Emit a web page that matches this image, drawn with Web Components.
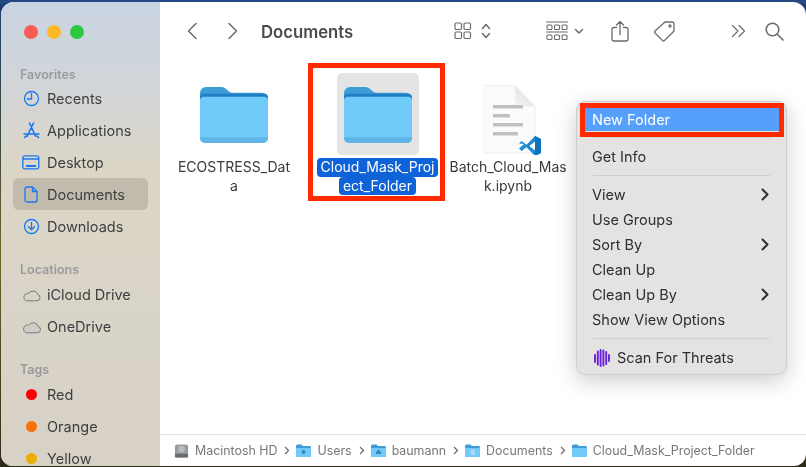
<!DOCTYPE html>
<html>
<head>
<meta charset="utf-8">
<title>Documents</title>
<style>
  html, body{
    margin: 0;
    width: 806px;
    height: 467px;
    overflow: hidden;
    font-family: Inter, "Noto Sans", sans-serif;
  }
  body{
    background:
      linear-gradient(#23467f, #2b4f8c 3px, transparent 3px),
      linear-gradient(#1f3f73 0, #3b4a3a 30%, #6f6426 55%, #2c2a16 100%);
  }
</style>
</head>
<body>

<template id="finder-window-tpl">
  <style>
    :host{
      display: flex;
      position: relative;
      width: 805px;
      height: 464px;
      margin: 2px 0 0 1px;
      border-radius: 13px 13px 12px 12px;
      overflow: hidden;
      background: #fff;
      filter: blur(.35px);
    }
    #sidebar{
      width: 159px;
      flex: none;
      box-sizing: border-box;
      padding: 23px 11px 0 12px;
      background: linear-gradient(180deg, #c9d4e2 0, #d0d5da 70px, #dcd6c6 170px, #d9d4c8 300px, #d8d2c6 100%);
      border-right: 1px solid #d4d4d2;
      overflow: hidden;
    }
    #lights{
      display: flex;
      gap: 9px;
      padding-left: 11px;
      margin-bottom: 28px;
    }
    .light{
      width: 14px;
      height: 14px;
      border-radius: 50%;
    }
    #main{
      flex: 1;
      min-width: 0;
      display: flex;
      flex-direction: column;
    }
    #content{
      flex: 1;
      min-height: 0;
      position: relative;
    }
  </style>
  <div id="sidebar">
    <div id="lights">
      <div class="light" style="background:#fb5b54"></div>
      <div class="light" style="background:#fdb828"></div>
      <div class="light" style="background:#2cc940"></div>
    </div>
    <slot name="sidebar"></slot>
  </div>
  <div id="main">
    <slot name="toolbar"></slot>
    <div id="content"><slot></slot></div>
    <slot name="path"></slot>
  </div>
</template>

<template id="side-section-tpl">
  <style>
    :host{
      display: block;
      margin-bottom: 19.5px;
    }
    #label{
      font-size: 12.5px;
      font-weight: 600;
      line-height: 16px;
      color: #9a9a9c;
      padding-left: 7px;
      margin-bottom: var(--label-gap, 0);
    }
  </style>
  <div id="label"></div>
  <slot></slot>
</template>

<template id="side-item-tpl">
  <style>
    :host{
      display: flex;
      align-items: center;
      height: 32px;
      border-radius: 6px;
      color: #3f3f3f;
      font-size: 14.5px;
      box-sizing: border-box;
    }
    :host([active]){
      background: #c0bbac;
    }
    #icon{
      width: 34px;
      flex: none;
      display: flex;
      justify-content: center;
      padding-left: 2px;
      box-sizing: border-box;
    }
    svg{ display: block; }
  </style>
  <div id="icon"><slot name="icon"></slot></div>
  <slot></slot>
</template>

<template id="tool-bar-tpl">
  <style>
    :host{
      display: flex;
      align-items: center;
      height: 58px;
      flex: none;
      color: #555;
    }
    #title{
      font-size: 16.7px;
      font-weight: 600;
      color: #4b4b4b;
      margin: 2px 0 0 22px;
    }
    svg{
      display: block;
      fill: none;
      stroke: #6b6b6b;
      stroke-width: 1.5;
      stroke-linecap: round;
      stroke-linejoin: round;
    }
    .nav{ margin-left: 26px; }
    .nav + .nav{ margin-left: 29px; }
    #right{
      margin-left: auto;
      display: flex;
      align-items: center;
      padding-right: 22px;
    }
  </style>
  <svg class="nav" width="12" height="20" viewBox="0 0 12 20"><path d="M10 2.500 2.500 10l7.500 7.500"/></svg>
  <svg class="nav" width="12" height="20" viewBox="0 0 12 20"><path d="M2 2.500 9.500 10 2 17.500"/></svg>
  <div id="title">Documents</div>
  <div id="right">
    <svg width="18" height="18" viewBox="0 0 18 18" style="stroke-width:1.2"><rect x="1" y="1" width="6.500" height="6.500" rx="1.200"/><rect x="10" y="1" width="6.500" height="6.500" rx="1.200"/><rect x="1" y="10" width="6.500" height="6.500" rx="1.200"/><rect x="10" y="10" width="6.500" height="6.500" rx="1.200"/></svg>
    <svg width="10" height="18" viewBox="0 0 10 18" style="margin-left:9px"><path d="M1.500 6.500 5 2.500l3.500 4M1.500 11.500 5 15.500l3.500-4"/></svg>
    <svg width="22" height="20" viewBox="0 0 22 20" style="margin-left:55px;stroke-width:1.100"><path d="M.5 1h21M.5 11h21" /><rect x="1" y="4" width="5" height="4.500" rx="1"/><rect x="8.500" y="4" width="5" height="4.500" rx="1"/><rect x="16" y="4" width="5" height="4.500" rx="1"/><rect x="1" y="14" width="5" height="4.500" rx="1"/><rect x="8.500" y="14" width="5" height="4.500" rx="1"/><rect x="16" y="14" width="5" height="4.500" rx="1"/></svg>
    <svg width="10" height="7" viewBox="0 0 10 7" style="margin-left:6px"><path d="M1.500 1.500 5 5l3.500-3.500"/></svg>
    <svg width="18" height="22" viewBox="0 0 18 22" style="margin-left:27px;stroke-width:1.300"><path d="M5.500 7.500H3a2 2 0 0 0-2 2V19a2 2 0 0 0 2 2h12a2 2 0 0 0 2-2V9.500a2 2 0 0 0-2-2h-2.500M9 14.500V1.500M5.500 5 9 1.500 12.500 5"/></svg>
    <svg width="23" height="22" viewBox="0 0 23 22" style="margin-left:24px;stroke-width:1.300"><path d="M12 2h7a2 2 0 0 1 2 2v7L11.500 20.500a1.500 1.500 0 0 1-2 0L2 13a1.500 1.500 0 0 1 0-2z"/><circle cx="17" cy="6" r="1"/></svg>
    <svg width="15" height="14" viewBox="0 0 15 14" style="margin-left:55px;stroke-width:1.200"><path d="M1.500 1.500 7 7l-5.500 5.500M8 1.500 13.500 7 8 12.500"/></svg>
    <svg width="19" height="19" viewBox="0 0 19 19" style="margin-left:19px;stroke-width:1.600"><circle cx="7.500" cy="7.500" r="6.300"/><path d="M12.300 12.300 18 18"/></svg>
  </div>
</template>

<template id="file-grid-tpl">
  <style>
    :host{
      display: grid;
      grid-template-columns: 132px 155px 106px;
      justify-content: start;
      padding: 13px 0 0 8px;
    }
  </style>
  <slot></slot>
</template>

<template id="file-item-tpl">
  <style>
    :host{
      display: flex;
      flex-direction: column;
      align-items: center;
      color: #3a3a3a;
      font-size: 14px;
    }
    #thumb{
      width: 82px;
      height: 82px;
      border-radius: 5px;
      display: flex;
      align-items: center;
      justify-content: center;
      flex: none;
    }
    :host([selected]) #thumb{ background: #e4e4e4; }
    #name{
      margin-top: 3px;
      width: 124px;
      flex: none;
      text-align: center;
      line-height: 18.500px;
    }
    #name span{ display: block; width: fit-content; margin: 0 auto; padding: 0 3.500px; }
    :host([selected]) #name span{
      background: #0e63d8;
      color: #fff;
      border-radius: 4px;
    }
  </style>
  <div id="thumb"><slot name="icon"></slot></div>
  <div id="name"></div>
</template>

<template id="folder-icon-tpl">
  <style>
    :host{ display: block; line-height: 0; margin-top: 1px; }
  </style>
  <svg width="68" height="58" viewBox="0 0 68 60" preserveAspectRatio="none">
    <path d="M0 7a6 6 0 0 1 6-6h15c3 0 4 1 6 3s3 3 6 3h29a6 6 0 0 1 6 6v20H0z" fill="#3d9bd8"/>
    <path d="M0 12a4 4 0 0 1 4-4h60a4 4 0 0 1 4 4v5H0z" fill="#1f7fc4"/>
    <path d="M0 15a4 4 0 0 1 4-4h60a4 4 0 0 1 4 4v39a5 5 0 0 1-5 5H5a5 5 0 0 1-5-5z" fill="#70cbfa"/>
    <path d="M0 53h68v1a5 5 0 0 1-5 5H5a5 5 0 0 1-5-5z" fill="#5fb6e6"/>
  </svg>
</template>

<template id="doc-icon-tpl">
  <style>
    :host{ display: block; line-height: 0; margin: 12px 0 0 8px; }
  </style>
  <svg width="58" height="70" viewBox="0 0 58 70">
    <defs>
      <linearGradient id="corner" x1="0" y1="1" x2="1" y2="0"><stop offset="0" stop-color="#f4f4f4"/><stop offset="1" stop-color="#dcdcdc"/></linearGradient>
    </defs>
    <path d="M2 .5h30l20 21V66a2 2 0 0 1-2 2H2a2 2 0 0 1-2-2V2.500a2 2 0 0 1 2-2z" fill="#fbfbfb" stroke="#ececec" stroke-width=".8"/>
    <path d="M32 .5V19.500a2 2 0 0 0 2 2h18z" fill="url(#corner)"/>
    <g fill="#c0c0c0">
      <rect x="10" y="20" width="30" height="3.500"/>
      <rect x="10" y="29" width="17" height="3.500"/>
      <rect x="10" y="38" width="30" height="3.500"/>
      <rect x="10" y="47" width="25" height="3.500"/>
    </g>
    <path d="M36 58.500 38.500 56l5 3.700L52 51l6 3v14l-6 3-8.500-8.700-5 3.700-2.500-2.500 5-4.500z" fill="#1f8fdc"/>
    <path d="M52 51l6 3v14l-6 3V65.500L44 61l8-5.500z" fill="#0f72bd"/>
    <path d="M52 56.500v9l-6-4.500z" fill="#fff"/>
  </svg>
</template>

<template id="context-menu-tpl">
  <style>
    :host{
      display: block;
      position: absolute;
      left: 416px;
      top: 41px;
      width: 211px;
      height: 274px;
      box-sizing: border-box;
      padding: 5px 5px;
      background: #e4e3e1;
      border: 1px solid #cfcecc;
      border-radius: 9px;
      box-shadow: 0 6px 22px rgba(0,0,0,.2);
      color: #2f2f2f;
      font-size: 14.5px;
    }
  </style>
  <slot></slot>
</template>

<template id="menu-item-tpl">
  <style>
    :host{
      display: flex;
      align-items: center;
      height: 25px;
      padding: 0 12px 0 10px;
    }
    :host([highlight]){
      background: #569ffd;
      color: #fff;
      height: 24px;
    }
    #arrow{
      display: none;
      margin-left: auto;
    }
    :host([more]) #arrow{ display: block; }
    ::slotted(svg){ margin-right: 6px; }
  </style>
  <slot></slot>
  <svg id="arrow" width="8" height="13" viewBox="0 0 8 13" fill="none" stroke="#2f2f2f" stroke-width="2" stroke-linecap="round" stroke-linejoin="round"><path d="M1.500 1.500 6.500 6.500l-5 5"/></svg>
</template>

<template id="menu-sep-tpl">
  <style>
    :host{
      display: block;
      height: 1px;
      background: #d0cfcd;
      margin: 6px 11px;
    }
  </style>
</template>

<template id="mark-box-tpl">
  <style>
    :host{
      display: block;
      position: absolute;
      box-sizing: border-box;
      border: 5px solid #ff2a00;
      pointer-events: none;
    }
  </style>
</template>

<template id="path-bar-tpl">
  <style>
    :host{
      display: flex;
      align-items: center;
      height: 32px;
      flex: none;
      box-sizing: border-box;
      border-top: 1px solid #e4e4e4;
      padding-left: 14px;
      color: #777;
      font-size: 12.4px;
      white-space: nowrap;
    }
  </style>
  <slot></slot>
</template>

<template id="path-crumb-tpl">
  <style>
    :host{
      display: flex;
      align-items: center;
    }
    #sep{
      margin: 0 6px 0 7px;
      display: block;
    }
    :host([last]) #sep{ display: none; }
    ::slotted(svg){ margin-right: 6px; }
  </style>
  <slot></slot>
  <svg id="sep" width="6" height="9" viewBox="0 0 6 9" fill="none" stroke="#6e6e6e" stroke-width="1.300"><path d="M1 1l3.500 3.500L1 8"/></svg>
</template>

<mac-finder>
  <side-section slot="sidebar" label="Favorites" style="--label-gap:-1px">
    <side-item>
      <svg slot="icon" width="17" height="17" viewBox="0 0 17 17" fill="none" stroke="#1a78f0" stroke-width="1.300" stroke-linecap="round"><circle cx="8.500" cy="8.500" r="7"/><path d="M8.500 3.500v5.500H4.500"/></svg>
      Recents
    </side-item>
    <side-item>
      <svg slot="icon" width="17" height="17" viewBox="0 0 17 17" fill="none" stroke="#1a78f0" stroke-width="1.600" stroke-linecap="round"><path d="M6.500 1l6 13M10.500 1l-6.500 13.500M1 12h15M1.500 15.500 3 14M15.500 15.500 14 14"/></svg>
      Applications
    </side-item>
    <side-item>
      <svg slot="icon" width="18" height="15" viewBox="0 0 18 15" fill="none" stroke="#1a78f0" stroke-width="1.300"><rect x=".8" y=".8" width="16" height="13" rx="2"/><path d="M1 4h16"/><path d="M4 11h10" stroke-width="2"/></svg>
      Desktop
    </side-item>
    <side-item active>
      <svg slot="icon" width="14" height="17" viewBox="0 0 14 17" fill="none" stroke="#1a78f0" stroke-width="1.300" stroke-linejoin="round"><path d="M3 1h5.500L13 5.500V14a2 2 0 0 1-2 2H3a2 2 0 0 1-2-2V3a2 2 0 0 1 2-2z"/><path d="M8.500 1v4.500H13"/></svg>
      Documents
    </side-item>
    <side-item>
      <svg slot="icon" width="17" height="17" viewBox="0 0 17 17" fill="none" stroke="#1a78f0" stroke-width="1.300" stroke-linecap="round" stroke-linejoin="round"><circle cx="8.500" cy="8.500" r="7"/><path d="M8.500 4.500v7M5.500 8.800l3 3 3-3"/></svg>
      Downloads
    </side-item>
  </side-section>
  <side-section slot="sidebar" label="Locations" style="--label-gap:1px">
    <side-item>
      <svg slot="icon" width="19" height="14" viewBox="0 0 19 13" fill="none" stroke="#7a7a7a" stroke-width="1"><path d="M5 12.300h10a3.300 3.300 0 0 0 .5-6.500 4 4 0 0 0-4.500-3 5 5 0 0 0-4.800 2.400A3.600 3.600 0 0 0 5 12.300z"/></svg>
      iCloud Drive
    </side-item>
    <side-item>
      <svg slot="icon" width="19" height="14" viewBox="0 0 19 13" fill="#cfcdc8" stroke="#7a7a7a" stroke-width="1"><path d="M4.500 12.300h11a3.300 3.300 0 0 0 .5-6.500 4.500 4.500 0 0 0-4.500-3.500 5 5 0 0 0-5 2.500 3.800 3.800 0 0 0-2 7.500z"/></svg>
      OneDrive
    </side-item>
  </side-section>
  <side-section slot="sidebar" label="Tags">
    <side-item>
      <svg slot="icon" width="11" height="11" viewBox="0 0 11 11"><circle cx="5.500" cy="5.500" r="5.500" fill="#fb0207"/></svg>
      Red
    </side-item>
    <side-item>
      <svg slot="icon" width="11" height="11" viewBox="0 0 11 11"><circle cx="5.500" cy="5.500" r="5.500" fill="#f97208"/></svg>
      Orange
    </side-item>
    <side-item>
      <svg slot="icon" width="11" height="11" viewBox="0 0 11 11"><circle cx="5.500" cy="5.500" r="5.500" fill="#eeac07"/></svg>
      Yellow
    </side-item>
  </side-section>

  <tool-bar slot="toolbar"></tool-bar>

  <file-grid>
    <file-item line1="ECOSTRESS_Dat" line2="a"><folder-icon slot="icon"></folder-icon></file-item>
    <file-item line1="Cloud_Mask_Proj" line2="ect_Folder" selected><folder-icon slot="icon"></folder-icon></file-item>
    <file-item line1="Batch_Cloud_Mas" line2="k.ipynb"><doc-icon slot="icon"></doc-icon></file-item>
  </file-grid>

  <mark-box style="left:148px;top:3px;width:137px;height:138px"></mark-box>

  <context-menu>
    <menu-item highlight>New Folder</menu-item>
    <menu-sep></menu-sep>
    <menu-item>Get Info</menu-item>
    <menu-sep></menu-sep>
    <menu-item more>View</menu-item>
    <menu-item>Use Groups</menu-item>
    <menu-item more>Sort By</menu-item>
    <menu-item>Clean Up</menu-item>
    <menu-item more>Clean Up By</menu-item>
    <menu-item>Show View Options</menu-item>
    <menu-sep></menu-sep>
    <menu-item>
      <svg width="19" height="18" viewBox="0 0 19 18" fill="none" stroke="#6a1fe0" stroke-width="1.900" stroke-linecap="round"><path d="M3 6v7M5.800 2.500v13M8.600 1v16M11.400 1.500v15M14.200 3v12M17 6v6"/></svg>
      Scan For Threats
    </menu-item>
  </context-menu>

  <mark-box style="left:420px;top:43px;width:204px;height:34px"></mark-box>

  <path-bar slot="path">
    <path-crumb>
      <svg width="15" height="16" viewBox="0 0 16 16"><rect x="1" y="1" width="14" height="14" rx="2" fill="#9a9d9f"/><rect x="1" y="11" width="14" height="4" rx="1" fill="#6a6d70"/><circle cx="8" cy="6" r="3.500" fill="#b9bcbe"/></svg>
      Macintosh HD
    </path-crumb>
    <path-crumb>
      <svg width="15" height="13" viewBox="0 0 15 13"><path d="M0 2a1.500 1.500 0 0 1 1.500-1.500h4L7 2h6.500A1.500 1.500 0 0 1 15 3.500V12a1 1 0 0 1-1 1H1a1 1 0 0 1-1-1z" fill="#3d9bd8"/><path d="M0 4h15v8a1 1 0 0 1-1 1H1a1 1 0 0 1-1-1z" fill="#70cbfa"/><circle cx="7.500" cy="8" r="2" fill="#3d86b8"/></svg>
      Users
    </path-crumb>
    <path-crumb>
      <svg width="15" height="13" viewBox="0 0 15 13"><path d="M0 2a1.500 1.500 0 0 1 1.500-1.500h4L7 2h6.500A1.500 1.500 0 0 1 15 3.500V12a1 1 0 0 1-1 1H1a1 1 0 0 1-1-1z" fill="#3d9bd8"/><path d="M0 4h15v8a1 1 0 0 1-1 1H1a1 1 0 0 1-1-1z" fill="#70cbfa"/><path d="M7.500 5.500 5 8v2h5V8z" fill="#3d86b8"/></svg>
      baumann
    </path-crumb>
    <path-crumb>
      <svg width="15" height="13" viewBox="0 0 15 13"><path d="M0 2a1.500 1.500 0 0 1 1.500-1.500h4L7 2h6.500A1.500 1.500 0 0 1 15 3.500V12a1 1 0 0 1-1 1H1a1 1 0 0 1-1-1z" fill="#3d9bd8"/><path d="M0 4h15v8a1 1 0 0 1-1 1H1a1 1 0 0 1-1-1z" fill="#70cbfa"/><path d="M5.500 5.500h3l1.500 1.500v4h-4.500z" fill="#a8dcf8"/></svg>
      Documents
    </path-crumb>
    <path-crumb last>
      <svg width="15" height="13" viewBox="0 0 15 13"><path d="M0 2a1.500 1.500 0 0 1 1.500-1.500h4L7 2h6.500A1.500 1.500 0 0 1 15 3.500V12a1 1 0 0 1-1 1H1a1 1 0 0 1-1-1z" fill="#3d9bd8"/><path d="M0 4h15v8a1 1 0 0 1-1 1H1a1 1 0 0 1-1-1z" fill="#70cbfa"/></svg>
      Cloud_Mask_Project_Folder
    </path-crumb>
  </path-bar>
</mac-finder>

<script>
  function stamp(el, id){
    var shadowRoot = el.attachShadow({mode: 'open'});
    shadowRoot.appendChild(document.getElementById(id).content.cloneNode(true));
    return shadowRoot;
  }

  class MacFinder extends HTMLElement {
    constructor(){
      super();
      stamp(this, 'finder-window-tpl');
    }
  }
  customElements.define('mac-finder', MacFinder);

  class SideSection extends HTMLElement {
    constructor(){
      super();
      stamp(this, 'side-section-tpl');
    }
    connectedCallback(){
      this.shadowRoot.querySelector('#label').textContent = this.getAttribute('label');
    }
  }
  customElements.define('side-section', SideSection);

  class FileItem extends HTMLElement {
    constructor(){
      super();
      stamp(this, 'file-item-tpl');
    }
    connectedCallback(){
      var name = this.shadowRoot.querySelector('#name');
      for(let attr of ['line1', 'line2']){
        var line = document.createElement('span');
        line.textContent = this.getAttribute(attr);
        name.appendChild(line);
      }
    }
  }
  customElements.define('file-item', FileItem);

  // the rest only need their template stamped
  var plain = {
    'side-item': 'side-item-tpl',
    'tool-bar': 'tool-bar-tpl',
    'file-grid': 'file-grid-tpl',
    'folder-icon': 'folder-icon-tpl',
    'doc-icon': 'doc-icon-tpl',
    'context-menu': 'context-menu-tpl',
    'menu-item': 'menu-item-tpl',
    'menu-sep': 'menu-sep-tpl',
    'mark-box': 'mark-box-tpl',
    'path-bar': 'path-bar-tpl',
    'path-crumb': 'path-crumb-tpl'
  };
  for(let tag in plain){
    customElements.define(tag, class extends HTMLElement {
      constructor(){
        super();
        stamp(this, plain[tag]);
      }
    });
  }
</script>
</body>
</html>
